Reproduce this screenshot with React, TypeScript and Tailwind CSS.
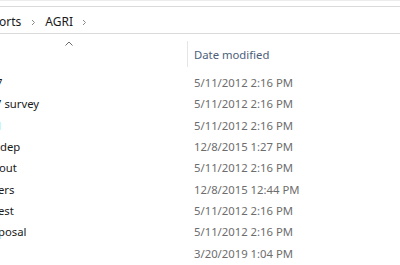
import React from "react";

const rows: { name: React.ReactNode; date: string }[] = [
  { name: <span className="ml-[-4px]">7</span>, date: "5/11/2012 2:16 PM" },
  { name: <span className="ml-[-5px]">7 survey</span>, date: "5/11/2012 2:16 PM" },
  { name: <span className="ml-[-2px] text-[#3fb6f0]">l</span>, date: "5/11/2012 2:16 PM" },
  { name: <span>dep</span>, date: "12/8/2015 1:27 PM" },
  { name: <span className="ml-[-1px]">out</span>, date: "5/11/2012 2:16 PM" },
  { name: <span className="ml-[-2px]">ers</span>, date: "12/8/2015 12:44 PM" },
  { name: <span className="ml-[-2px]">est</span>, date: "5/11/2012 2:16 PM" },
  { name: <span className="ml-[-2px]">posal</span>, date: "5/11/2012 2:16 PM" },
  { name: <span></span>, date: "3/20/2019 1:04 PM" },
];

function Chevron() {
  return (
    <svg width="5" height="7" viewBox="0 0 5 7" className="shrink-0">
      <path d="M1 1 L3.5 3.5 L1 6" fill="none" stroke="#8a8a8a" strokeWidth="1" />
    </svg>
  );
}

export default function App() {
  return (
    <div
      className="w-[400px] h-[265px] bg-white overflow-hidden flex flex-col text-[11.3px]"
      style={{ fontFamily: '"Noto Sans", "Open Sans", sans-serif' }}
    >
      <div className="h-[1px] bg-[#ececec]" />
      <div className="h-[5px]" />
      <div className="h-[29px] border-y border-[#dadada] flex items-center pt-[5px] text-[#1a1a1a] text-[12px]">
        <span className="ml-[-1px]">orts</span>
        <span className="ml-[10px] mt-[1px]"><Chevron /></span>
        <span className="ml-[9px]">AGRI</span>
        <span className="ml-[9px] mt-[1px]"><Chevron /></span>
      </div>
      <div className="h-[39px] flex shrink-0">
        <div className="w-[187px] relative">
          <svg width="8" height="5" viewBox="0 0 8 5" className="absolute left-[65px] top-[7px]">
            <path d="M0.5 4.5 L4 1 L7.5 4.5" fill="none" stroke="#6b6b6b" strokeWidth="1" />
          </svg>
        </div>
        <div className="w-[1px] mt-[7px] h-[26px] bg-[#e5e5e5]" />
        <div className="flex items-center pt-[4px] pl-[6px] text-[#4c607a]">Date modified</div>
      </div>
      <div className="flex flex-col">
        {rows.map((r, i) => (
          <div key={i} className="h-[21.375px] flex items-center shrink-0">
            <div className="w-[188px] overflow-hidden whitespace-nowrap text-[#1a1a1a] flex">{r.name}</div>
            <div className="pl-[6px] text-[#6d6d6d] whitespace-nowrap">{r.date}</div>
          </div>
        ))}
      </div>
    </div>
  );
}
